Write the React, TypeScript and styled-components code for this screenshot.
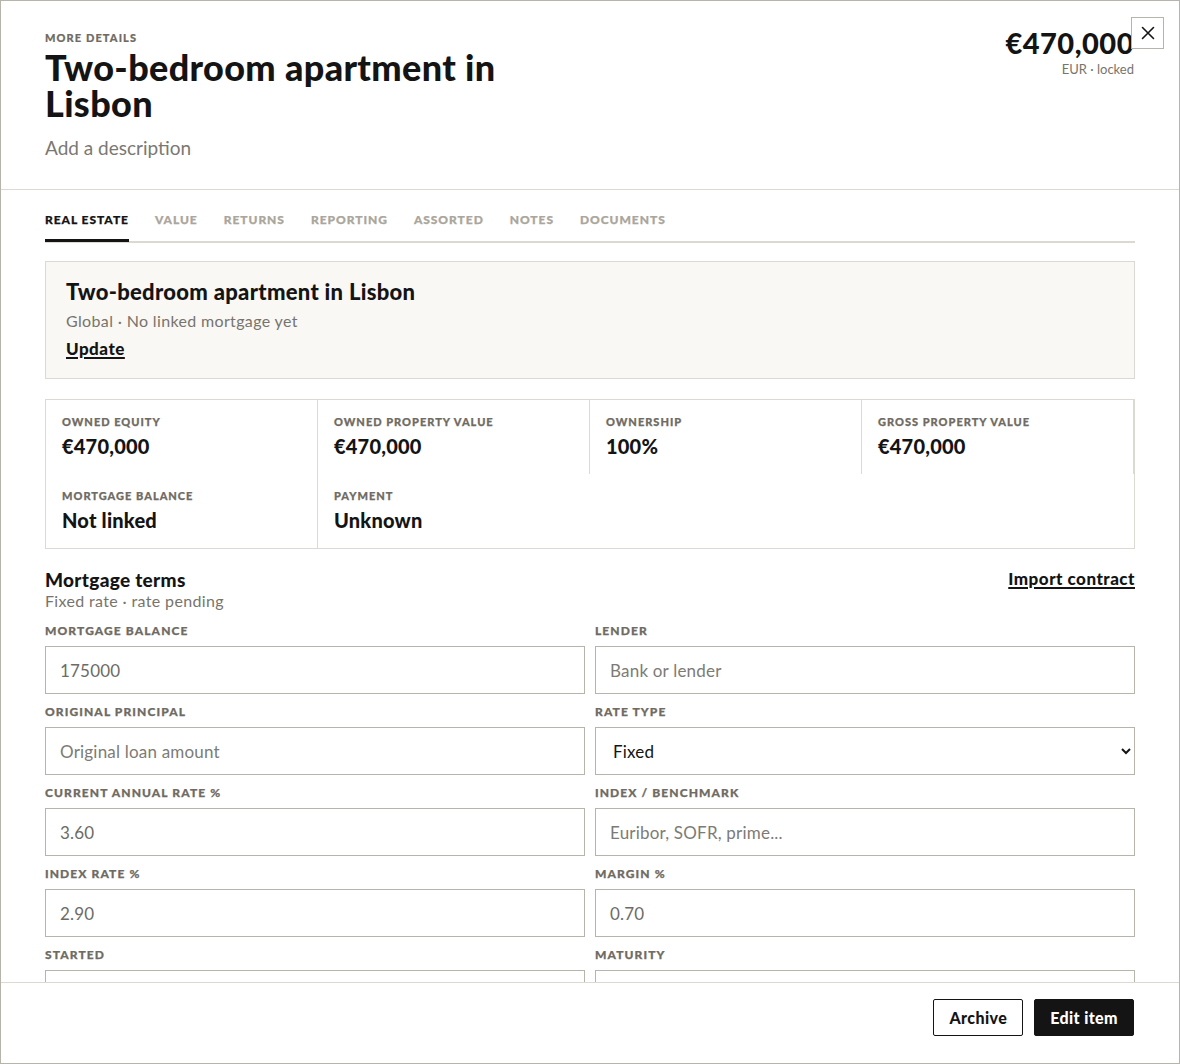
import React from 'react';
import styled, { createGlobalStyle } from 'styled-components';

const GlobalStyle = createGlobalStyle`
  html, body {
    margin: 0;
    padding: 0;
    background: #ffffff;
  }
  body {
    font-family: Lato, 'Noto Sans', 'Liberation Sans', sans-serif;
    color: #141414;
    -webkit-font-smoothing: antialiased;
  }
  * {
    box-sizing: border-box;
  }
`;

const Modal = styled.div`
  position: relative;
  width: 1180px;
  height: 1064px;
  border: 1px solid #b7b4ab;
  background: #fff;
  display: flex;
  flex-direction: column;
`;

const Header = styled.header`
  display: flex;
  justify-content: space-between;
  align-items: flex-start;
  padding: 30px 45px 29px 44px;
  border-bottom: 1px solid #dcd9d3;
`;

const Eyebrow = styled.div`
  font-size: 11px;
  line-height: 14px;
  font-weight: 900;
  letter-spacing: 1.1px;
  text-transform: uppercase;
  color: #6f6b63;
  -webkit-text-stroke: 0.2px currentColor;
`;

const Title = styled.h1`
  margin: 4px 0 0;
  max-width: 500px;
  font-size: 36px;
  line-height: 36px;
  font-weight: 900;
  letter-spacing: 0.35px;
`;

const Description = styled.div`
  margin-top: 15px;
  font-size: 19px;
  line-height: 24px;
  color: #7a7872;
`;

const PriceBlock = styled.div`
  margin-top: -5px;
  text-align: right;
`;

const Price = styled.div`
  font-size: 29px;
  line-height: 34px;
  font-weight: 900;
  letter-spacing: 0.5px;
`;

const PriceMeta = styled.div`
  margin-top: 1px;
  font-size: 13px;
  line-height: 16px;
  color: #77746c;
`;

const CloseButton = styled.button`
  position: absolute;
  top: 16px;
  right: 15px;
  width: 33px;
  height: 32px;
  padding: 0;
  display: flex;
  align-items: center;
  justify-content: center;
  background: #fff;
  border: 1px solid #b7b4ab;
  cursor: pointer;
`;

const Body = styled.main`
  flex: 1;
  overflow-y: auto;
  padding: 23px 44px 40px 44px;
  scrollbar-width: none;
  &::-webkit-scrollbar {
    display: none;
  }
`;

const TabBar = styled.nav`
  display: flex;
  gap: 26px;
  border-bottom: 2px solid #dcd9d3;
`;

const Tab = styled.div<{ $active?: boolean }>`
  padding-bottom: 12px;
  margin-bottom: -1px;
  font-size: 12px;
  line-height: 14px;
  font-weight: 900;
  letter-spacing: 0.95px;
  text-transform: uppercase;
  -webkit-text-stroke: 0.25px currentColor;
  color: ${(p) => (p.$active ? '#141414' : '#aaa69c')};
  border-bottom: 3px solid ${(p) => (p.$active ? '#141414' : 'transparent')};
`;

const SummaryCard = styled.section`
  margin-top: 18px;
  padding: 17px 20px 19px;
  background: #f9f8f5;
  border: 1px solid #dcd9d3;
`;

const CardTitle = styled.div`
  font-size: 22px;
  line-height: 26px;
  font-weight: 900;
  letter-spacing: 0.3px;
`;

const Muted = styled.div<{ $gap?: number }>`
  margin-top: ${(p) => p.$gap ?? 0}px;
  font-size: 16px;
  line-height: 20px;
  letter-spacing: 0.35px;
  color: #77746c;
`;

const TextLink = styled.a<{ $gap?: number }>`
  display: inline-block;
  margin-top: ${(p) => p.$gap ?? 0}px;
  font-size: 17px;
  line-height: 20px;
  font-weight: 900;
  letter-spacing: 0.5px;
  color: #141414;
  text-decoration: underline;
  text-decoration-thickness: 1.5px;
  text-underline-offset: 2px;
`;

const StatGrid = styled.section`
  margin-top: 20px;
  display: grid;
  grid-template-columns: repeat(4, 1fr);
  border: 1px solid #dcd9d3;
`;

const StatCell = styled.div`
  padding: 15px 16px 16px;
  border-right: 1px solid #dcd9d3;
  &:last-child {
    border-right: none;
  }
`;

const StatLabel = styled.div`
  font-size: 11px;
  line-height: 14px;
  font-weight: 900;
  letter-spacing: 1px;
  text-transform: uppercase;
  color: #6f6b63;
  -webkit-text-stroke: 0.25px currentColor;
`;

const StatValue = styled.div`
  margin-top: 5px;
  font-size: 20px;
  line-height: 24px;
  font-weight: 900;
  letter-spacing: 0.2px;
`;

const SectionHead = styled.div`
  margin-top: 20px;
  display: flex;
  justify-content: space-between;
  align-items: flex-start;
`;

const SectionTitle = styled.div`
  font-size: 19px;
  line-height: 22px;
  font-weight: 900;
  letter-spacing: 0.3px;
`;

const FormGrid = styled.div`
  margin-top: 13px;
  display: grid;
  grid-template-columns: 1fr 1fr;
  column-gap: 10px;
  row-gap: 11px;
`;

const Field = styled.label`
  display: flex;
  flex-direction: column;
  gap: 8px;
`;

const FieldLabel = styled.span`
  font-size: 12px;
  line-height: 14px;
  font-weight: 900;
  letter-spacing: 1.1px;
  text-transform: uppercase;
  color: #6f6b63;
  -webkit-text-stroke: 0.25px currentColor;
`;

const TextInput = styled.input`
  height: 48px;
  padding: 0 14px;
  border: 1px solid #b7b4ab;
  border-radius: 0;
  background: #fff;
  font-family: inherit;
  font-size: 17px;
  letter-spacing: 0.2px;
  color: #6d6b66;
  outline: none;
  &::placeholder {
    color: #7d7b76;
  }
`;

const Select = styled.select`
  height: 48px;
  padding: 0 8px 0 13px;
  border: 1px solid #b7b4ab;
  border-radius: 0;
  background: #fff;
  font-family: inherit;
  font-size: 17px;
  letter-spacing: 0.2px;
  color: #141414;
  outline: none;
`;

const Footer = styled.footer`
  display: flex;
  justify-content: flex-end;
  gap: 11px;
  padding: 16px 45px 27px;
  border-top: 1px solid #dcd9d3;
`;

const Button = styled.button<{ $primary?: boolean }>`
  height: 37px;
  padding: 0 15px;
  border: 1px solid #141414;
  border-radius: 2px;
  background: ${(p) => (p.$primary ? '#141414' : '#fff')};
  color: ${(p) => (p.$primary ? '#fff' : '#141414')};
  font-family: inherit;
  font-size: 16px;
  font-weight: 900;
  letter-spacing: 0.4px;
  cursor: pointer;
`;

const tabs = ['Real estate', 'Value', 'Returns', 'Reporting', 'Assorted', 'Notes', 'Documents'];

const stats = [
  { label: 'Owned equity', value: '€470,000' },
  { label: 'Owned property value', value: '€470,000' },
  { label: 'Ownership', value: '100%' },
  { label: 'Gross property value', value: '€470,000' },
  { label: 'Mortgage balance', value: 'Not linked' },
  { label: 'Payment', value: 'Unknown' },
];

type FieldDef = {
  label: string;
  value?: string;
  placeholder?: string;
  select?: string[];
};

const fields: FieldDef[] = [
  { label: 'Mortgage balance', value: '175000' },
  { label: 'Lender', placeholder: 'Bank or lender' },
  { label: 'Original principal', placeholder: 'Original loan amount' },
  { label: 'Rate type', select: ['Fixed', 'Variable', 'Mixed'] },
  { label: 'Current annual rate %', value: '3.60' },
  { label: 'Index / benchmark', placeholder: 'Euribor, SOFR, prime...' },
  { label: 'Index rate %', value: '2.90' },
  { label: 'Margin %', value: '0.70' },
  { label: 'Started' },
  { label: 'Maturity' },
];

const CloseIcon = () => (
  <svg width="14" height="14" viewBox="0 0 14 14" fill="none">
    <path d="M1.5 1.5l11 11M12.5 1.5l-11 11" stroke="#141414" strokeWidth="1.6" strokeLinecap="round" />
  </svg>
);

export default function App() {
  return (
    <>
      <GlobalStyle />
      <Modal>
        <Header>
          <div>
            <Eyebrow>More details</Eyebrow>
            <Title>Two-bedroom apartment in Lisbon</Title>
            <Description>Add a description</Description>
          </div>
          <PriceBlock>
            <Price>€470,000</Price>
            <PriceMeta>EUR · locked</PriceMeta>
          </PriceBlock>
        </Header>
        <CloseButton aria-label="Close">
          <CloseIcon />
        </CloseButton>

        <Body>
          <TabBar>
            {tabs.map((t, i) => (
              <Tab key={t} $active={i === 0}>
                {t}
              </Tab>
            ))}
          </TabBar>

          <SummaryCard>
            <CardTitle>Two-bedroom apartment in Lisbon</CardTitle>
            <Muted $gap={6}>Global · No linked mortgage yet</Muted>
            <TextLink href="#" $gap={8}>
              Update
            </TextLink>
          </SummaryCard>

          <StatGrid>
            {stats.map((s) => (
              <StatCell key={s.label}>
                <StatLabel>{s.label}</StatLabel>
                <StatValue>{s.value}</StatValue>
              </StatCell>
            ))}
          </StatGrid>

          <SectionHead>
            <div>
              <SectionTitle>Mortgage terms</SectionTitle>
              <Muted>Fixed rate · rate pending</Muted>
            </div>
            <TextLink href="#">Import contract</TextLink>
          </SectionHead>

          <FormGrid>
            {fields.map((f) => (
              <Field key={f.label}>
                <FieldLabel>{f.label}</FieldLabel>
                {f.select ? (
                  <Select defaultValue={f.select[0]}>
                    {f.select.map((o) => (
                      <option key={o}>{o}</option>
                    ))}
                  </Select>
                ) : (
                  <TextInput defaultValue={f.value} placeholder={f.placeholder} />
                )}
              </Field>
            ))}
          </FormGrid>
        </Body>

        <Footer>
          <Button>Archive</Button>
          <Button $primary>Edit item</Button>
        </Footer>
      </Modal>
    </>
  );
}
